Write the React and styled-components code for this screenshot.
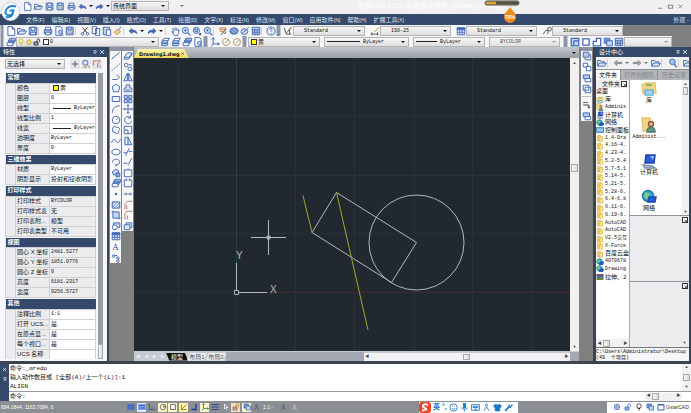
import React from "react";
import styled, { createGlobalStyle } from "styled-components";

const NAVY = "#34496b";
const CANVAS = "#212830";
const GRAY = "#808080";
const BLUE = "#3f68b4";
const SANS = `"Liberation Sans", "Noto Sans CJK SC", sans-serif`;
const MONO = `"Liberation Mono", "Noto Sans CJK SC", monospace`;

const GlobalStyle = createGlobalStyle`
  * { box-sizing: border-box; }
  body { margin: 0; font-family: ${SANS}; font-size: 6px; line-height: 8px; color: #111; }
  button, select, input { font: inherit; color: inherit; margin: 0; padding: 0; border: 0; background: none; }
  a { color: inherit; text-decoration: none; }
  ul { list-style: none; margin: 0; padding: 0; }
`;

/* ---------- icons, all drawn on a 16 unit grid ---------- */

const ICONS = {
  new: <path fill="#fff" d="M3 1h7l4 4v10H3zM10 1v4h4" />,
  open: (
    <g>
      <path d="M1 13V4h5l1 2h5v2" />
      <path fill="#dce6f5" d="M1 13l3-5h11l-3 5z" />
    </g>
  ),
  save: (
    <g>
      <path fill="#a9c0e6" d="M2 2h12v12H2z" />
      <path fill="#fff" d="M5 2h6v5H5zM4 10h8v4H4z" />
    </g>
  ),
  saveAs: (
    <g>
      <path fill="#a9c0e6" d="M2 2h11v12H2z" />
      <path fill="#fff" d="M5 2h5v4H5z" />
      <path stroke="#d08a2a" d="M14 7l-6 7" />
    </g>
  ),
  print: (
    <g>
      <path fill="#a9b9d6" d="M2 6h12v6H2z" />
      <path fill="#fff" d="M4 2h8v4H4zM4 10h8v4H4z" />
    </g>
  ),
  preview: (
    <g>
      <path fill="#fff" d="M3 1h8l2 3v11H3z" />
      <circle cx="10" cy="10" r="3" fill="#c5d6f2" />
      <path d="M12 12l3 3" />
    </g>
  ),
  undo: <path fill="currentColor" d="M2 8l4-4v3c5-1 8 1 8 5-2-2-4-3-8-2v2z" />,
  redo: <path fill="currentColor" d="M14 8l-4-4v3c-5-1-8 1-8 5 2-2 4-3 8-2v2z" />,
  cut: (
    <g>
      <path stroke="#333" d="M4 2l7 9M12 2L5 11" />
      <circle cx="4" cy="12.500" r="2" />
      <circle cx="12" cy="12.500" r="2" />
    </g>
  ),
  copy: <path fill="#fff" d="M2 1h7v11H2zM7 4h7v11H7z" />,
  paste: (
    <g>
      <path fill="#c9d6ea" d="M2 2h10v12H2z" />
      <path fill="#fff" d="M7 6h7v9H7z" />
    </g>
  ),
  brush: (
    <g stroke="#c98a34">
      <path fill="#f3d392" d="M2 10l5-5 5 4-5 5z" />
      <path d="M9 6l4-5" stroke="#3f68b4" />
    </g>
  ),
  pan: <path fill="#fff" d="M3 8l2 4 2 3h5l2-5V6M5 12V3M8 8V2M11 8V3M14 8V5" />,
  zoomIn: (
    <g>
      <circle cx="7" cy="7" r="5" fill="#d5e3fa" />
      <path strokeWidth="2" d="M11 11l4 4" />
      <path d="M5 7h4M7 5v4" />
    </g>
  ),
  zoomWin: (
    <g>
      <circle cx="7" cy="7" r="5" fill="#d5e3fa" />
      <path strokeWidth="3" stroke="#222a55" d="M12 12l2 2" />
      <path d="M5 5h4v4H5z" />
    </g>
  ),
  search: (
    <g>
      <circle cx="7" cy="6" r="4.500" fill="#9fc6ee" />
      <path strokeWidth="2" d="M10 10l4 5" />
    </g>
  ),
  props: (
    <g>
      <path stroke="#c07a3a" d="M3 3h9v3H3zM3 9h6" />
      <path stroke="#444" d="M5 14l8-9M10 13l3-4" />
    </g>
  ),
  globe: (
    <g>
      <ellipse cx="8" cy="8" rx="6.500" ry="5" fill="#5f86c8" />
      <path stroke="#c5d6f2" d="M3 6l6 6M6 4l7 6" />
    </g>
  ),
  tools: (
    <g>
      <ellipse cx="7" cy="9" rx="5.500" ry="4.500" fill="#d5e3fa" />
      <path d="M4 11l5-4M7 9l7-7" />
    </g>
  ),
  calc: (
    <g>
      <path fill="#c5d6f2" d="M2 2h12v12H2z" />
      <path d="M2 6h12M6 6v8M10 6v8M2 10h12" />
    </g>
  ),
  help: (
    <g>
      <circle cx="8" cy="8" r="6.500" fill="#eef3fc" />
      <path d="M6 6c0-3 5-2 4 0-1 1-2 1-2 3M8 11v1.500" />
    </g>
  ),
  textStyle: (
    <g stroke="#555">
      <path d="M2 3l3 10h8M13 2L6 11M10 5l1 8" />
      <path stroke="#c98a34" d="M14 2l-4 5" />
    </g>
  ),
  dimStyle: (
    <g stroke="#555">
      <path d="M1 13h13M3 10v5M12 10v5" />
      <path stroke="#c98a34" d="M14 2L7 10" />
    </g>
  ),
  leader: (
    <g stroke="#555">
      <path d="M2 13l4-6h4" />
      <circle cx="12" cy="5" r="3" />
      <path d="M10 8l-1 5" />
    </g>
  ),
  layers: (
    <g>
      <path fill="#fff" d="M6 2h9l-3 5H3z" />
      <path fill="#c5d6f2" d="M4 6h9l-2 4H2zM4 10h9l-2 4H2z" />
    </g>
  ),
  layersBox: (
    <g>
      <path fill="#c5d6f2" d="M6 2h9v5H6zM4 5h9v5H4z" />
      <path fill="#fff" d="M2 9h9v5H2z" />
    </g>
  ),
  bulb: (
    <g stroke="#c9b23a">
      <circle cx="8" cy="6" r="4.500" fill="#fff6a0" />
      <path d="M6 11h4M6 13h4" />
    </g>
  ),
  sun: (
    <g stroke="#b39427">
      <circle cx="8" cy="8" r="4" fill="#ffe96a" />
      <path d="M8 1v2M8 13v2M1 8h2M13 8h2M3 3l1 1M13 3l-1 1M3 13l1-1M13 13l-1-1" />
    </g>
  ),
  lock: (
    <g>
      <path fill="#8fa9dc" d="M2 8h8v6H2z" />
      <path d="M8 8V4c0-3 5-3 5 0v4" />
    </g>
  ),
  ucs: <path d="M5 1v10h10M3 4l2-3 2 3M12 9l3 2-3 2M5 11l-3 4" />,
  ucsWorld: (
    <g stroke="#b0895a">
      <circle cx="8" cy="8" r="5.500" fill="#fff" />
      <path d="M6 10l5-5" />
    </g>
  ),
  line: <path d="M1 13L14 2" />,
  xline: <path strokeDasharray="3 2" d="M1 14L15 2" />,
  pline: <path d="M2 12h7c5 0 5-7 0-7" />,
  polygon: <path fill="#eef4ff" d="M8 2l6 4-2 8H4L2 6z" />,
  rect: <path fill="#eef4ff" d="M2 4h12v8H2z" />,
  arc: <path d="M2 14C2 7 7 3 14 3" />,
  circle: (
    <g>
      <circle cx="8" cy="8" r="6" fill="#fff" />
      <path d="M8 8l3-3" />
    </g>
  ),
  cloud: <path d="M3 8c-2-5 4-7 6-4 5-1 6 4 3 6 1 5-5 5-6 1-3 1-5-1-3-3z" />,
  spline: <path d="M1 11c3-8 5-6 7-3s4 5 7-3" />,
  ellipse: <ellipse cx="8" cy="8" rx="6.500" ry="4.500" fill="#fff" />,
  ellipseArc: <path d="M2 9c0-7 12-7 12-1 0 4-5 5-7 5M9 11l-2 2 2 2" />,
  block: (
    <g>
      <path fill="#c5d6f2" d="M2 6l5-4 5 2v7H4z" />
      <path fill="#8fa9dc" d="M8 8h6v6H8z" />
    </g>
  ),
  point: <rect x="7" y="7" width="2" height="2" />,
  hatch: (
    <g>
      <path fill="#9fb8e8" d="M2 3h12v10H2z" />
      <path stroke="#fff" d="M4 12l8-8M3 8l4-4M9 12l4-4" />
    </g>
  ),
  gradient: (
    <g>
      <path fill="#c5d6f2" d="M3 3h10v10H3z" />
      <path d="M1 3h2M13 13h2M3 1v2M13 13v2" />
    </g>
  ),
  region: (
    <g>
      <path fill="#c5d6f2" d="M4 3h10v7H4z" />
      <circle cx="6" cy="10" r="4" fill="#fff" />
    </g>
  ),
  table: (
    <g>
      <path fill="#fff" d="M2 3h12v11H2z" />
      <path fill="currentColor" d="M2 3h12v3H2z" />
      <path d="M6 6v8M10 6v8M2 10h12" />
    </g>
  ),
  points: (
    <g>
      <circle cx="4" cy="5" r="2" />
      <circle cx="11" cy="8" r="2" />
      <circle cx="11" cy="13" r="2" />
      <path d="M6 4h4" />
    </g>
  ),
  erase: <path fill="#dfe8f8" d="M2 10l5-7h7l-4 7zM2 10v3h7l5-7V3" />,
  copyObj: (
    <g>
      <circle cx="5" cy="5" r="3" />
      <circle cx="11" cy="11" r="3" />
      <path d="M9 4h4v3" />
    </g>
  ),
  mirror: <path fill="#dfe8f8" d="M7 2v12H1zM9 2v12h6z" />,
  offset: <path fill="#dfe8f8" d="M2 14V8h3V3h6v5h3v6zM5 11h6" />,
  array: <path fill="#c5d6f2" d="M2 2h5v5H2zM9 2h5v5H9zM2 9h5v5H2zM9 9h5v5H9z" />,
  move: <path d="M8 1v14M1 8h14M6 3l2-2 2 2M6 13l2 2 2-2M3 6L1 8l2 2M13 6l2 2-2 2" />,
  rotate: <path d="M12 4c-5-4-11 1-9 6s9 5 11 0M12 1v4H8" />,
  scale: <path d="M2 2h12v12H2zM2 8h6v6" />,
  stretch: <path fill="#dfe8f8" d="M3 2h5l6 12H3zM8 2v12" />,
  trim: <path d="M1 9h5M9 7h6M4 14L10 2" />,
  extend: <path d="M1 10h6M8 13l6-11" />,
  breakAt: <path d="M2 3h12v11H2zM7 2h3" />,
  breakObj: <path d="M6 3H2v11h12V3h-4M6 1v4M10 1v4" />,
  join: <path d="M1 8h5M10 8h5M5 6l2 2-2 2M11 6L9 8l2 2" />,
  chamfer: <path stroke="#b77a66" d="M3 15V6l4-4h8M6 15V8" />,
  fillet: <path stroke="#b77a66" d="M3 15V8c0-4 2-6 6-6h6M7 15V9" />,
  explode: <path fill="#dfe8f8" d="M2 6h9v8H2zM5 3h9v8h-3M5 3v3" />,
  front: (
    <g>
      <path fill="#fff" d="M5 6h9v8H5z" />
      <path fill="#b9c9f2" d="M2 2h9v8H2z" />
    </g>
  ),
  back: <path fill="#fff" d="M2 2h7v6H2zM7 7h7v7H7z" />,
  above: (
    <g>
      <path fill="#b9c9f2" d="M2 3h10v6H2z" />
      <path fill="#fff" d="M5 9h9v5H5z" />
    </g>
  ),
  under: <path fill="#fff" d="M2 2h9v8H2zM5 5h9v9H5z" />,
  textFront: <path stroke="#333" d="M2 4h3M6 4h3M2 8h9v5M9 11l2 2 2-2" />,
  pick: <path stroke="#555" d="M8 3v10M3 8h10" />,
  quick: (
    <g>
      <circle cx="7" cy="6" r="4" />
      <path stroke="#c07a3a" d="M9 8l5 6M4 13h5" />
    </g>
  ),
  filter: <path stroke="#b77a66" d="M2 3h11l-4 5v6M2 3v8M12 10l2 4" />,
  left: <path stroke="#888" fill="#aaa" d="M2 8l4-4v3h8v2H6v3z" />,
  right: <path stroke="#888" fill="#aaa" d="M14 8l-4-4v3H2v2h8v3z" />,
  first: <path fill="currentColor" d="M12 3L5 8l7 5zM3 3v10" />,
  prev: <path fill="currentColor" d="M11 3L4 8l7 5z" />,
  next: <path fill="currentColor" d="M5 3l7 5-7 5z" />,
  last: <path fill="currentColor" d="M4 3l7 5-7 5zM13 3v10" />,
  vp1: <path fill="#c5d6f2" strokeWidth="2" d="M2 2h12v12H2zM6 6h8M6 6v8" />,
  vp2: <path fill="#fff" strokeWidth="2" d="M3 3h10v10H3z" />,
  vp3: <path fill="#fff" strokeWidth="2" d="M2 14V7h5V2h7v12z" />,
  ortho: <path strokeWidth="3" d="M12 2v11H3" />,
  grid: <path strokeWidth="2" d="M2 2v12M6 2v12M10 2v12M14 2v12M2 5h12M2 10h12" />,
  snap: <path d="M3 2v11h11M6 10h1M9 10h1" />,
  polar: (
    <g stroke="#555">
      <circle cx="8" cy="8" r="5.500" />
      <path d="M8 8h7M8 8l4-5" />
    </g>
  ),
  track: <path stroke="#8a6a20" d="M3 13L13 3M3 3v10h10" />,
  lwt: <path strokeWidth="2" d="M1 3h14M1 8h14M1 13h14" />,
  cursor: <path stroke="#fff" d="M5 2v10l3-3h4zM8 10l2 4" />,
  person: (
    <g>
      <circle cx="8" cy="4" r="2" />
      <path d="M3 14l5-7 5 7" />
    </g>
  ),
  smile: (
    <g>
      <circle cx="8" cy="8" r="6.500" />
      <path d="M5 9c1 3 5 3 6 0M6 5v1M10 5v1" />
    </g>
  ),
  mic: (
    <g>
      <rect x="6" y="1" width="4" height="8" fill="currentColor" />
      <path d="M3 8c0 5 10 5 10 0M8 12v3" />
    </g>
  ),
  keyboard: (
    <g>
      <path d="M1 3h14v10H1z" />
      <path d="M3 6h10M3 8h10M5 11h6" />
    </g>
  ),
  shirt: <path fill="currentColor" d="M5 2l3 2 3-2 4 3-2 3-1-1v7H4V7L3 8 1 5z" />,
  wrench: <path strokeWidth="3" d="M2 14l7-7M9 3v4h4M13 3l2 2" />,
  gear: (
    <g>
      <circle cx="8" cy="8" r="5.500" fill="#dbe6f6" />
      <circle cx="8" cy="8" r="2.500" />
    </g>
  ),
  windows: (
    <g>
      <path fill="#7793d6" d="M2 2h9v8H2z" />
      <path fill="#c5d6f2" d="M6 6h9v8H6z" />
    </g>
  ),
  bulbLine: (
    <g stroke="#222">
      <circle cx="8" cy="6" r="4.500" fill="#fff" />
      <path strokeWidth="2" d="M6 11h4M7 14h2" />
    </g>
  ),
  square: <path strokeWidth="2" d="M2 3h12v11H2zM2 4h12" />,
  close: <path d="M4 4l8 8M12 4l-8 8" />,
  min: <path d="M3 12h9" />,
  max: <path d="M3 5h10v7H3z" />,
  pin: <path d="M5 4h6v6H5zM8 10v4" />,
  folder: (
    <g stroke="#e0b654">
      <path fill="#f2cc62" d="M3 3h6l1 11H3z" />
      <path fill="#fbe59b" d="M9 5h4v9H6z" />
    </g>
  ),
  pc: (
    <g stroke="#1d46a8">
      <path fill="#2c5bd8" d="M5 2h9l-1 8H4z" />
      <path fill="#b8c4d8" stroke="#8390a8" d="M2 12l9 1 3 2H4z" />
      <path fill="#9fc3ff" stroke="none" d="M9 3h4l-1 4z" />
    </g>
  ),
  net: (
    <g>
      <circle cx="7" cy="7" r="5.500" fill="#3aa7cf" stroke="#1e7da6" />
      <path stroke="none" fill="#7fd07c" d="M4 3l5 2-3 5-3-2z" />
      <path stroke="#1d46a8" fill="#2c5bd8" d="M8 8h7l-1 5H7z" />
    </g>
  ),
  lib: (
    <g>
      <path fill="#f2d57c" stroke="#e3c878" d="M1 4l4-2h9l1 10H2z" />
      <path fill="#a8d6f0" stroke="#6fb0d8" d="M4 9h8v5H4z" />
      <path stroke="#5fae5c" d="M5 4h6" />
    </g>
  ),
  user: (
    <g>
      <path fill="#f2d57c" stroke="#e3c878" d="M1 1h8l1 13H2z" />
      <circle cx="10" cy="7" r="2.500" fill="#e6bd94" stroke="#8a5a3a" />
      <path fill="#5f9f8a" stroke="#4a7a6a" d="M6 15c0-6 8-6 8 0z" />
    </g>
  ),
  control: (
    <g>
      <path fill="#6fb3e8" stroke="#3a7fc0" d="M1 3h14v10H1z" />
      <path stroke="#fff" d="M4 10V6M8 10V5M12 10V7" />
    </g>
  ),
  rar: (
    <g stroke="none">
      <path fill="#8a4a6a" d="M1 2h14v4H1z" />
      <path fill="#3f7a9a" d="M1 6h14v4H1z" />
      <path fill="#6a8a3a" d="M1 10h14v4H1z" />
    </g>
  ),
};

const Svg = styled.svg`
  display: block;
  flex: none;
  fill: none;
  stroke: currentColor;
`;

const Icon = ({ name, size = 10 }) => (
  <Svg width={size} height={size} viewBox="0 0 16 16" strokeWidth="1.500" aria-hidden="true">
    {ICONS[name]}
  </Svg>
);

/* ---------- shared parts ---------- */

const IconButton = styled.button`
  display: grid;
  place-items: center;
  flex: none;
  width: ${(p) => p.$w || 11}px;
  height: 10px;
  color: ${(p) => p.$color || BLUE};
  background: ${(p) => p.$bg || "none"};
`;

const Caret = styled.span`
  flex: none;
  width: 0;
  height: 0;
  margin: 0 ${(p) => p.$gap || 3}px;
  border: 2px solid transparent;
  border-top-color: ${(p) => p.$color || "#111"};
  border-bottom: 0;
`;

const Separator = styled.span`
  flex: none;
  width: 4px;
  height: 8px;
  border-left: 1px solid #d0d2d8;
  margin-right: ${(p) => p.$after || 0}px;
`;

const Grip = styled.span`
  flex: none;
  align-self: stretch;
  width: ${(p) => p.$w || 5}px;
  background: #8b95a6;
  border: solid #c2c6ce;
  border-width: 0 1px;
  margin-right: 1px;
`;

const Toolbar = styled.div`
  display: flex;
  align-items: center;
  height: 11px;
  background: #f6f6f9;
`;

const ToolbarRest = styled.div`
  flex: 1;
  align-self: stretch;
  background: ${GRAY};
`;

const ComboBox = styled.span`
  display: flex;
  align-items: center;
  flex: none;
  width: ${(p) => p.$w}px;
  height: 10px;
  margin-right: ${(p) => p.$after || 0}px;
  border: 1px solid #b4b4b8;
  background: linear-gradient(#f7f7f7, #dedede);
`;

const ComboSelect = styled.select`
  appearance: none;
  flex: 1;
  min-width: 0;
  height: 8px;
  line-height: 8px;
  padding-left: ${(p) => p.$indent || 1}px;
  font-family: ${(p) => (p.$cjk ? SANS : MONO)};
  font-size: ${(p) => (p.$cjk ? 6 : 5)}px;
  color: ${(p) => (p.$dim ? "#555" : "#111")};
`;

const Swatch = styled.span`
  flex: none;
  width: 6px;
  height: 6px;
  margin-left: 2px;
  border: 1px solid #333;
  background: ${(p) => p.$color};
`;

const Rule = styled.span`
  flex: none;
  width: ${(p) => p.$w}px;
  height: 1px;
  margin: 0 2px;
  background: #222;
`;

const Combo = ({ label, value, w, after, indent, cjk, dim, children }) => (
  <ComboBox $w={w} $after={after}>
    {children}
    <ComboSelect aria-label={label} $indent={indent} $cjk={cjk} $dim={dim} defaultValue={value}>
      <option>{value}</option>
    </ComboSelect>
    <Caret $color={dim && "#999"} />
  </ComboBox>
);

const Tools = ({ names, w, color, size, bg }) =>
  names.map((n, i) => (
    <IconButton key={n + i} $w={w} $color={color} $bg={bg} aria-label={n}>
      <Icon name={n} size={size} />
    </IconButton>
  ));

const Track = styled.div`
  display: flex;
  flex: none;
  flex-direction: ${(p) => (p.$row ? "row" : "column")};
  align-items: center;
  ${(p) => (p.$row ? "height" : "width")}: ${(p) => p.$size || 9}px;
  background: ${(p) => p.$bg || "#f1f1f3"};
`;

const Room = styled.span`
  flex: ${(p) => p.$share || 1};
`;

const Thumb = styled.span`
  flex: none;
  width: ${(p) => p.$w || 7}px;
  height: ${(p) => p.$h || 7}px;
  border: 1px solid #a9a9ad;
  background: linear-gradient(90deg, #fafafa, #d8d8da);
`;

const Arrow = styled.button`
  flex: none;
  width: 7px;
  height: 7px;
  font-size: 4px;
  line-height: 7px;
  text-align: center;
  color: #444;
`;

/* ---------- frame ---------- */

const Shell = styled.div`
  display: flex;
  flex-direction: column;
  height: 100vh;
  overflow: hidden;
  background: ${GRAY};
`;

const TitleBar = styled.header`
  position: relative;
  display: flex;
  align-items: center;
  height: 14px;
  padding: 0 6px 2px 22px;
  background: #f0eff1;
`;

const Logo = styled.svg`
  position: absolute;
  left: 1px;
  top: 2px;
  z-index: 2;
`;

const DocTitle = styled.span`
  flex: 1;
  padding-left: 170px;
  color: #fff;
  font-size: 7px;
`;

const Gauge = styled.svg`
  position: absolute;
  left: 484px;
  top: 0;
  z-index: 2;
`;

const MenuBar = styled.nav`
  display: flex;
  align-items: center;
  gap: 7px;
  height: 11px;
  padding: 0 2px 0 26px;
  background: ${NAVY};
  color: #dfe4ee;
  white-space: nowrap;
`;

const MenuItem = styled.a`
  font-size: 6px;
  line-height: 10px;

  &:last-child {
    margin-left: auto;
  }
`;

const Key = styled.span`
  font-size: 5px;
`;

const Main = styled.main`
  display: flex;
  flex: 1;
  min-height: 0;
`;

const PanelTitle = styled.div`
  display: flex;
  align-items: center;
  flex: none;
  height: 10px;
  padding: 0 1px 0 3px;
  background: ${NAVY};
  color: #fff;

  h2 {
    flex: 1;
    margin: 0;
    font-size: 6px;
    font-weight: 400;
  }
`;

/* ---------- properties ---------- */

const PropsPanel = styled.section`
  display: flex;
  flex-direction: column;
  flex: none;
  width: 109px;
  background: #f6f7fa;
  border-right: 2px solid #3b4353;
`;

const SelectionRow = styled.div`
  display: flex;
  align-items: center;
  gap: 1px;
  padding: 2px 4px 4px 5px;
`;

const PropsScroll = styled.div`
  display: flex;
  flex: 1;
  min-height: 0;
  gap: 2px;
  margin: 0 4px 2px 5px;
`;

const Groups = styled.div`
  flex: 1;
  display: flex;
  flex-direction: column;
  gap: 1px;
  overflow: hidden;
`;

const GroupTable = styled.table`
  flex: none;
  width: 100%;
  table-layout: fixed;
  border-collapse: collapse;
  background: #e4e4e6;

  tr {
    height: 10px;
  }
  thead th {
    padding: 0 2px;
    text-align: left;
    font-weight: 700;
    color: #fff;
    background: ${NAVY};
    line-height: 9px;
  }
  td,
  tbody th {
    padding: 0 0 0 1px;
    overflow: hidden;
    white-space: nowrap;
    text-align: left;
    font-weight: 400;
    line-height: 9px;
    border: 1px solid #d0d0d2;
    background: ${(p) => (p.$readonly ? "#ececee" : "#fff")};
  }
  tbody th {
    background: #ececee;
  }
`;

const Indent = styled.col`
  width: 10px;
`;

const LabelCol = styled.col`
  width: 34px;
`;

const Value = styled.span`
  display: flex;
  align-items: center;
  gap: 1px;
  font-family: ${MONO};
  font-size: ${(p) => (p.$latin ? 5 : 6)}px;
  height: 9px;
`;

const GROUPS = [
  {
    title: "常规",
    rows: [
      ["颜色", "黄", "swatch"],
      ["图层", "0"],
      ["线型", "ByLayer", "line"],
      ["线型比例", "1"],
      ["线宽", "ByLayer", "line"],
      ["透明度", "ByLayer"],
      ["厚度", "0"],
    ],
  },
  { title: "三维效果", rows: [["材质", "ByLayer"], ["阴影显示", "投射和接收阴影"]] },
  {
    title: "打印样式",
    readonly: true,
    rows: [
      ["打印样式", "BYCOLOR"],
      ["打印样式表", "无"],
      ["打印表附...", "模型"],
      ["打印表类型", "不可用"],
    ],
  },
  {
    title: "视图",
    readonly: true,
    rows: [
      ["圆心 X 坐标", "2481.5277"],
      ["圆心 Y 坐标", "1851.0776"],
      ["圆心 Z 坐标", "0"],
      ["高度", "6181.2317"],
      ["宽度", "9256.5727"],
    ],
  },
  {
    title: "其他",
    rows: [
      ["注释比例", "1:1"],
      ["打开 UCS...", "是"],
      ["在原点显...", "是"],
      ["每个视口...", "是"],
      ["UCS 名称", ""],
    ],
  },
];

const PropertyGroup = ({ title, rows, readonly }) => (
  <GroupTable $readonly={readonly}>
    <colgroup>
      <Indent />
      <LabelCol />
      <col />
    </colgroup>
    <thead>
      <tr>
        <th colSpan={3}>{title}</th>
      </tr>
    </thead>
    <tbody>
      {rows.map(([label, value, kind]) => (
        <tr key={label}>
          {label === rows[0][0] && <th rowSpan={rows.length} aria-hidden="true" />}
          <th scope="row">{label}</th>
          <td>
            <Value $latin={/^[\w.:]*$/.test(value)}>
              {kind === "swatch" && <Swatch $color="#ffff00" />}
              {kind === "line" && <Rule $w={18} />}
              {value}
            </Value>
          </td>
        </tr>
      ))}
    </tbody>
  </GroupTable>
);

const Properties = () => (
  <PropsPanel>
    <PanelTitle>
      <h2>特性</h2>
      <IconButton $w={7} $color="#fff" aria-label="固定">
        <Icon name="pin" size={6} />
      </IconButton>
      <IconButton $w={8} $color="#fff" aria-label="关闭">
        <Icon name="close" size={8} />
      </IconButton>
    </PanelTitle>
    <SelectionRow>
      <Combo label="选择" value="无选择" w={60} after={4} cjk />
      <Tools names={["pick", "quick", "filter"]} w={10} bg="#e2e5ee" />
    </SelectionRow>
    <PropsScroll>
      <Groups>
        {GROUPS.map((g) => (
          <PropertyGroup key={g.title} {...g} />
        ))}
      </Groups>
      <Track $size={5} $bg="#9b9ba1">
        <Room />
        <Thumb $w={5} $h={15} />
      </Track>
    </PropsScroll>
  </PropsPanel>
);

/* ---------- tool columns ---------- */

const ToolColumn = styled.div`
  display: flex;
  flex-direction: column;
  flex: none;
  align-self: flex-start;
  width: 11px;
  height: ${(p) => p.$h}px;
  border-top: 4px solid #8b95a6;
  background: #f8f8fb;

  ${IconButton} {
    flex: 1;
    height: auto;
  }
`;

const ToolArea = styled.div`
  display: flex;
  flex: none;
  gap: 1px;
  padding: ${(p) => p.$pad || "0 1px"};
`;

const TextTool = styled.button`
  flex: 1;
  font: 9px/10px "Liberation Serif", serif;
  color: #2b4a86;
`;

const ColumnRule = styled.hr`
  width: 9px;
  margin: 2px 1px;
  border: 0;
  border-top: 1px solid #b9bcc4;
`;

const DRAW = [
  "line", "xline", "pline", "polygon", "rect", "arc", "circle", "cloud", "spline", "ellipse",
  "ellipseArc", "block", "layersBox", "point", "hatch", "gradient", "region", "table",
];
const MODIFY = [
  "erase", "copyObj", "mirror", "offset", "array", "move", "rotate", "scale", "stretch",
  "trim", "extend", "breakAt", "breakObj", "join", "chamfer", "fillet", "explode",
];

/* ---------- drawing window ---------- */

const DrawingWindow = styled.section`
  display: flex;
  flex-direction: column;
  flex: 1;
  min-width: 0;
`;

const DocTabs = styled.div`
  display: flex;
  align-items: flex-end;
  justify-content: space-between;
  height: 11px;
  padding-right: 2px;
  background: linear-gradient(#c3c6cd, #9a9ea8);
`;

const DocTab = styled.button`
  display: flex;
  align-items: center;
  justify-content: space-between;
  width: 55px;
  height: 9px;
  padding: 0 4px 0 5px;
  font-size: 5px;
  font-family: "DejaVu Sans", sans-serif;
  font-weight: 700;
  white-space: nowrap;
  background: linear-gradient(#fff6b0, #f3dc5a);
  clip-path: polygon(4px 0, 50px 0, 100% 100%, 0 100%);
`;

const CanvasRow = styled.div`
  display: flex;
  flex: 1;
  min-height: 0;
  background: ${CANVAS};

  ${Track} {
    padding: 1px 0;
  }
`;

const Drawing = styled.svg`
  flex: 1;
  min-width: 0;
  height: 100%;
  fill: none;
  stroke: #b3b8be;
  stroke-width: 1;

  text {
    fill: #b3b8be;
    stroke: none;
    font-size: 10px;
  }
`;

const LayoutBar = styled.div`
  display: flex;
  align-items: center;
  height: 10px;
  padding-top: 1px;
  background: #c6cad3;
`;

const LayoutTab = styled.button`
  width: ${(p) => (p.$active ? 22 : 20)}px;
  height: 8px;
  margin-right: -1px;
  font-size: 6px;
  line-height: 8px;
  color: ${(p) => (p.$active ? "#fff" : "#555")};
  background: ${(p) => (p.$active ? "#0c0d10" : "#e9ebef")};
  clip-path: polygon(${(p) => (p.$active ? "0 0, 85% 0, 100% 100%, 15% 100%" : "15% 0, 100% 0, 85% 100%, 0 100%")});
`;

const Splitter = styled.span`
  flex: 2;
  align-self: stretch;
  margin-left: 1px;
  background: #a3a8b3;
`;

const HTrack = styled(Track)`
  flex: 3;
`;

const Corner = styled.span`
  width: 9px;
  align-self: stretch;
  background: #a3a8b3;
`;

const GRID_X = [44, 161, 220, 280, 338, 397];
const GRID_Y = [58, 117, 175];

const Canvas = () => (
  <Drawing role="img" aria-label="Drawing1.dwg">
    <g stroke="#28313a">
      {GRID_X.map((x) => (
        <line key={x} x1={x + 0.5} x2={x + 0.5} y1="0" y2="100%" />
      ))}
      {GRID_Y.map((y) => (
        <line key={y} x1="0" x2="100%" y1={y + 0.5} y2={y + 0.5} />
      ))}
      <line x1="102.500" x2="102.500" y1="237" y2="100%" />
      <line x1="0" x2="100" y1="234.500" y2="234.500" />
    </g>
    <line x1="102.500" x2="102.500" y1="0" y2="205" stroke="#26472f" />
    <line x1="133" x2="100%" y1="234.500" y2="234.500" stroke="#45282f" />
    <circle cx="282.500" cy="184.500" r="47.500" />
    <path d="M202.500 134.500L282.500 184.500L257.500 224.500L178 174.500Z" />
    <path stroke="#a3a82f" d="M169 137.500L178 174.500M202.500 134.500L234 272" />
    <path d="M117 179.500h35M134.500 162v35M133 178h3v3h-3zM102.500 205v27M105 234.500h28M100.500 232.500h4v4h-4z" />
    <text x="102" y="201">
      Y
    </text>
    <text x="136" y="235">
      X
    </text>
  </Drawing>
);

/* ---------- design center ---------- */

const DesignPanel = styled.section`
  display: flex;
  flex-direction: column;
  flex: none;
  width: 98px;
  border: solid #3b4353;
  border-width: 0 2px 0 3px;
  background: #f1f1f3;
`;

const DesignTools = styled.div`
  display: flex;
  align-items: center;
  height: 12px;
  overflow: hidden;
`;

const DesignTabs = styled.div`
  display: flex;
  align-items: flex-end;
  gap: 1px;
  height: 11px;
  background: #8d8f94;
  overflow: hidden;
`;

const DesignTab = styled.button`
  flex: none;
  width: ${(p) => p.$w}px;
  height: 10px;
  white-space: nowrap;
  color: ${(p) => (p.$active ? "#000" : "#84868c")};
  background: ${(p) => (p.$active ? "#fff" : "#b2b4b9")};
`;

const DesignBody = styled.div`
  display: flex;
  flex: 1;
  min-height: 0;
`;

const TreePane = styled.div`
  display: flex;
  flex-direction: column;
  flex: none;
  width: 34px;
  background: #fff;
  border-right: 1px solid #a9a9ad;
`;

const TreeHead = styled.div`
  display: flex;
  align-items: center;
  justify-content: flex-end;
  gap: 1px;
  height: 8px;
  padding-right: 2px;
  background: #eeeef0;
  white-space: nowrap;
`;

const CloseBox = styled.button`
  display: grid;
  place-items: center;
  flex: none;
  width: 6px;
  height: 6px;
  border: 1px solid #333;
  background: #fff;
`;

const Tree = styled.ul`
  display: grid;
  grid-auto-rows: 1fr;
  height: 193px;
  margin-bottom: auto;
`;

const TreeItem = styled.li`
  display: flex;
  align-items: center;
  gap: 1px;
  min-height: 0;
  white-space: nowrap;
  font-family: ${MONO};
  font-size: ${(p) => (p.$latin ? 5 : 6)}px;
  line-height: 7px;
`;

const ContentPane = styled.div`
  display: flex;
  flex-direction: column;
  flex: 1;
  min-width: 0;
`;

const FileList = styled.div`
  display: flex;
  flex: none;
  height: 135px;
  background: #fff;
`;

const Files = styled.ul`
  flex: 1;
  padding-top: 1px;
  overflow: hidden;
`;

const FileItem = styled.li`
  display: flex;
  flex-direction: column;
  align-items: center;
  width: 38px;
  height: 36px;
  font-family: ${MONO};
  font-size: ${(p) => (p.$latin ? 5 : 6)}px;
`;

const Preview = styled.div`
  display: flex;
  flex: 1;
  justify-content: flex-end;
  padding: 1px;
  border-top: 1px solid #909296;
  background: #ececee;
`;

const PreviewSide = styled.div`
  display: flex;
  flex-direction: column;
  align-items: center;
  justify-content: space-between;
`;

const PathInfo = styled.p`
  margin: 0;
  height: 14px;
  padding-top: 1px;
  border-top: 1px solid #777;
  background: #f6f6f8;
  font-family: ${MONO};
  font-size: 5px;
  line-height: 6px;
  white-space: pre;
`;

const TREE = [
  ["", "桌面"],
  ["lib", "库"],
  ["user", "Adminis"],
  ["pc", "计算机"],
  ["net", "网络"],
  ["control", "控制面板"],
  ["folder", "1.4-Dra"],
  ["folder", "4.16-4."],
  ["folder", "4.23-4."],
  ["folder", "5.2-5.4"],
  ["folder", "5.7-5.1"],
  ["folder", "5.14-5."],
  ["folder", "5.21-5."],
  ["folder", "5.28-6."],
  ["folder", "6.4-6.8"],
  ["folder", "6.11-6."],
  ["folder", "6.19-6."],
  ["folder", "AutoCAD"],
  ["folder", "AutoCAD"],
  ["folder", "V2.5交互"],
  ["folder", "X-Force"],
  ["folder", "百度云盘"],
  ["net", "4070678"],
  ["net", "Drawing"],
  ["rar", "拉伸、2"],
];

const FILES = [
  ["lib", "库"],
  ["user", "Administ..."],
  ["pc", "计算机"],
  ["net", "网络"],
];

const DesignCenter = () => (
  <DesignPanel>
    <PanelTitle>
      <h2>设计中心</h2>
      <IconButton $w={7} $color="#fff" aria-label="固定">
        <Icon name="pin" size={6} />
      </IconButton>
      <IconButton $w={7} $color="#fff" aria-label="关闭">
        <Icon name="close" size={8} />
      </IconButton>
    </PanelTitle>
    <DesignTools>
      <Tools names={["open"]} />
      <Separator $after={2} />
      <Tools names={["left"]} w={9} />
      <Caret $color="#777" />
      <Tools names={["right"]} w={9} />
      <Caret $color="#777" />
      <Tools names={["open"]} w={10} />
      <Separator $after={2} />
      <Tools names={["search"]} />
      <Separator $after={1} />
      <Tools names={["open"]} w={10} />
    </DesignTools>
    <DesignTabs>
      <DesignTab $w={24} $active>
        文件夹
      </DesignTab>
      <DesignTab $w={36}>打开的图形</DesignTab>
      <DesignTab $w={32}>历史记录</DesignTab>
    </DesignTabs>
    <DesignBody>
      <TreePane>
        <TreeHead>
          文件夹
          <CloseBox aria-label="关闭">
            <Icon name="close" size={6} />
          </CloseBox>
        </TreeHead>
        <Tree>
          {TREE.map(([icon, label], i) => (
            <TreeItem key={i} $latin={/[A-Za-z.-]/.test(label) || /^\d+$/.test(label)}>
              {icon && <Icon name={icon} size={8} />}
              {label}
            </TreeItem>
          ))}
        </Tree>
        <Track $row $size={8}>
          <Arrow>◀</Arrow>
          <Thumb />
          <Room />
          <Arrow>▶</Arrow>
        </Track>
      </TreePane>
      <ContentPane>
        <FileList>
          <Files>
            {FILES.map(([icon, label]) => (
              <FileItem key={label} $latin={/^[\x20-\x7e]+$/.test(label)}>
                <Icon name={icon} size={16} />
                {label}
              </FileItem>
            ))}
          </Files>
          <Track $size={7}>
            <Arrow>▲</Arrow>
            <Thumb $w={5} $h={8} />
            <Room />
            <Arrow>▼</Arrow>
          </Track>
        </FileList>
        <Preview>
          <CloseBox aria-label="关闭预览">
            <Icon name="close" size={6} />
          </CloseBox>
        </Preview>
        <Preview>
          <PreviewSide>
            <CloseBox aria-label="关闭说明">
              <Icon name="close" size={6} />
            </CloseBox>
            <Arrow>▼</Arrow>
          </PreviewSide>
        </Preview>
      </ContentPane>
    </DesignBody>
    <PathInfo>{"C:\\Users\\Administrator\\Desktop\n(49  个项目)"}</PathInfo>
  </DesignPanel>
);

/* ---------- command line and status ---------- */

const CommandPanel = styled.section`
  display: flex;
  flex: none;
  height: 40px;
  border-top: 3px solid #3b4353;
  background: #fff;
  font-family: ${MONO};
`;

const CommandSide = styled.div`
  display: flex;
  flex-direction: column;
  align-items: center;
  flex: none;
  width: 9px;
  background: ${NAVY};
`;

const CommandBody = styled.div`
  flex: 1;
  display: flex;
  flex-direction: column;
`;

const History = styled.div`
  display: flex;
  justify-content: space-between;
  height: 28px;
  border-bottom: 1px solid #999;
`;

const Log = styled.pre`
  margin: 0;
  padding-left: 1px;
  font: 6px/9px ${MONO};
`;

const Prompt = styled.label`
  display: flex;
  align-items: center;
  flex: 1;
  padding-left: 1px;
`;

const PromptInput = styled.input`
  flex: 1;
`;

const PromptTrack = styled(Track)`
  width: 37px;
  margin-right: 9px;
`;

const StatusBar = styled.footer`
  display: flex;
  align-items: center;
  flex: none;
  height: 12px;
  background: #8b8e93;
`;

const Coords = styled.span`
  width: 126px;
  padding-left: 1px;
  color: #fff;
  font-size: 5px;
`;

const Toggle = styled(IconButton)`
  width: 9px;
  height: 9px;
  margin-right: ${(p) => p.$after || 2}px;
`;

const ScaleText = styled.span`
  color: #fff;
  font-size: 5px;
  margin-right: 6px;
`;

const Ime = styled.div`
  display: flex;
  align-items: center;
  gap: 2px;
  width: 99px;
  height: 11px;
  margin-left: auto;
  margin-right: 89px;
  background: #fff;
  color: #1b78c8;
  font-size: 7px;
  font-weight: 700;
`;

const Tray = styled.div`
  display: flex;
  align-items: center;
  height: 11px;
  width: 84px;
  padding-left: 4px;
  background: #fdfdfe;
  font-size: 5px;
  color: #333;
`;

const TOGGLES = [
  ["grid", "none", "#2f62d8"],
  ["grid", "#dbe8ff", "#2f62d8"],
  ["snap", "none", "#2b4a86"],
  ["polar", "#fff6c8"],
  ["vp2", "#fff6c8", "#777"],
  ["track", "#fff3a8"],
  ["ortho", "none", "#1f3f9c"],
  ["ucs", "#fff6c8", "#3a7a4a"],
  ["lwt", "none", "#2b4a86"],
  ["cursor", "none"],
  ["lock", "#f3dcc0", "#b86a20"],
  ["windows", "#fff6c8"],
];

const MENUS = [
  ["文件", "F"],
  ["编辑", "E"],
  ["视图", "V"],
  ["插入", "I"],
  ["格式", "O"],
  ["工具", "T"],
  ["绘图", "D"],
  ["文字", "X"],
  ["标注", "N"],
  ["修改", "M"],
  ["窗口", "W"],
  ["应用软件", "N"],
  ["帮助", "H"],
  ["扩展工具", "X"],
];

const App = () => {
  return (
    <Shell>
      <GlobalStyle />
      <TitleBar>
        <Logo width="19" height="19" viewBox="0 0 19 19" aria-label="GstarCAD">
          <circle cx="9.500" cy="9.500" r="9" fill="#fff" stroke="#c8d2e2" />
          <path
            d="M15 4.500C9 3 5 6 4.500 9.500C4 13 8 14 11 12.500L12.500 8.500H8.500M12 11C11 14.500 8 15.500 5 15"
            fill="none"
            stroke="#1b87d0"
            strokeWidth="2"
          />
        </Logo>
        <Tools names={["new", "open", "save", "saveAs", "print", "undo"]} size={9} />
        <Caret $gap={1} />
        <Tools names={["redo"]} size={9} />
        <Caret $gap={1} />
        <Combo label="工作空间" value="传统界面" w={58} after={8} cjk />
        <Caret $color="#777" />
        <DocTitle>浩辰CAD 2012 标准版试用期 - [Drawing1.dwg]</DocTitle>
        <Gauge width="40" height="26" viewBox="0 0 40 26" aria-label="70%">
          <rect x="1" y="1" width="34" height="4" rx="2" fill="#d9a23a" stroke="#4a4a48" />
          <path d="M12 3h22" stroke="#4d554a" strokeWidth="3" />
          <path d="M26 7C24 11 20 12 20 17a6 6 0 0 0 12 0C32 12 28 11 26 7z" fill="#ef8a1d" />
          <text x="21" y="19" fontSize="5" fontWeight="700" fill="#fff">
            70%
          </text>
        </Gauge>
        <Tools names={["min", "max", "close"]} w={10} size={7} color="#555" />
      </TitleBar>
      <MenuBar>
        {MENUS.map(([text, key]) => (
          <MenuItem href="#" key={text}>
            {text}
            <Key>({key})</Key>
          </MenuItem>
        ))}
        <MenuItem href="#">外观 -</MenuItem>
      </MenuBar>

      <Toolbar>
        <Grip $w={4} />
        <Tools names={["new", "open", "save"]} />
        <Separator />
        <Tools names={["print", "preview", "saveAs"]} />
        <Separator />
        <Tools names={["cut", "copy", "paste", "brush"]} />
        <Separator />
        <Tools names={["undo"]} />
        <Caret $gap={2} />
        <Tools names={["redo"]} />
        <Caret $gap={2} />
        <Separator />
        <Tools names={["pan", "zoomIn", "zoomWin", "zoomIn"]} />
        <Separator />
        <Tools names={["props", "globe", "tools", "calc"]} />
        <Separator />
        <Tools names={["help"]} />
        <Grip />
        <Tools names={["textStyle"]} />
        <Combo label="文字样式" value="Standard" w={72} after={4} indent={10} />
        <Tools names={["dimStyle"]} />
        <Combo label="标注样式" value="ISO-25" w={71} after={4} indent={10} />
        <Tools names={["table"]} />
        <Combo label="表格样式" value="Standard" w={71} after={4} indent={10} />
        <Tools names={["leader"]} />
        <Combo label="引线样式" value="Standard" w={71} indent={10} />
        <ToolbarRest />
      </Toolbar>
      <Toolbar>
        <Grip $w={4} />
        <Tools names={["layersBox"]} />
        <ComboBox $w={143}>
          <Icon name="bulb" size={8} />
          <Icon name="sun" size={8} />
          <Icon name="lock" size={8} />
          <Swatch $color="#fff" />
          <ComboSelect aria-label="图层" defaultValue="0">
            <option>0</option>
          </ComboSelect>
          <Caret />
        </ComboBox>
        <Tools names={["layers", "layers", "layersBox", "preview"]} />
        <Grip />
        <Tools names={["ucs", "ucsWorld", "ucsWorld"]} />
        <Grip />
        <Combo label="颜色" value="黄" w={72} after={4} cjk>
          <Swatch $color="#ffff00" />
        </Combo>
        <Combo label="线型" value="ByLayer" w={85} after={4}>
          <Rule $w={33} />
        </Combo>
        <Combo label="线宽" value="ByLayer" w={72} after={4}>
          <Rule $w={21} />
        </Combo>
        <Combo label="打印样式" value="BYCOLOR" w={71} after={3} indent={10} dim />
        <Grip />
        <Tools names={["vp1", "vp2", "vp3", "windows", "calc"]} />
        <Combo label="视口比例" value="" w={48} dim />
        <ToolbarRest />
      </Toolbar>

      <Main>
        <Properties />
        <ToolArea>
          <ToolColumn $h={216}>
            <Tools names={DRAW} />
            <TextTool aria-label="多行文字">A</TextTool>
            <Tools names={["points"]} />
          </ToolColumn>
          <ToolColumn $h={184}>
            <Tools names={MODIFY} />
          </ToolColumn>
        </ToolArea>
        <DrawingWindow>
          <DocTabs>
            <DocTab>
              Drawing1.dwg <Icon name="close" size={5} />
            </DocTab>
            <IconButton $w={7} aria-label="文档列表">
              <Caret $gap={1} />
            </IconButton>
          </DocTabs>
          <CanvasRow>
            <Canvas />
            <Track>
              <Arrow>▲</Arrow>
              <Room $share={4} />
              <Thumb $h={8} />
              <Room $share={7} />
              <Arrow>▼</Arrow>
            </Track>
          </CanvasRow>
          <LayoutBar>
            <Tools names={["first", "prev", "next", "last"]} w={8} size={5} color="#f4f5f8" />
            <LayoutTab $active>模型</LayoutTab>
            <LayoutTab>布局1</LayoutTab>
            <LayoutTab>布局2</LayoutTab>
            <Splitter />
            <HTrack $row $size={8}>
              <Arrow>◀</Arrow>
              <Room />
              <Thumb $h={6} />
              <Room />
              <Arrow>▶</Arrow>
            </HTrack>
            <Corner />
          </LayoutBar>
        </DrawingWindow>
        <ToolArea $pad="0 1px 0 2px">
          <ToolColumn $h={74}>
            <Tools names={["front", "back", "above", "under"]} />
            <ColumnRule />
            <Tools names={["textFront", "above"]} />
          </ToolColumn>
        </ToolArea>
        <DesignCenter />
      </Main>

      <CommandPanel>
        <CommandSide>
          <IconButton $w={8} $color="#fff" aria-label="关闭">
            <Icon name="close" size={7} />
          </IconButton>
          <IconButton $w={8} $color="#fff" aria-label="固定">
            <Icon name="pin" size={6} />
          </IconButton>
        </CommandSide>
        <CommandBody>
          <History>
            <Log>{"命令:_mredo\n输入动作数目或 [全部(A)/上一个(L)]:1\nALIGN"}</Log>
            <Track>
              <Arrow>▲</Arrow>
              <Room />
              <Thumb />
              <Room />
              <Arrow>▼</Arrow>
            </Track>
          </History>
          <Prompt>
            命令:
            <PromptInput type="text" />
            <PromptTrack $row $size={8}>
              <Arrow>◀</Arrow>
              <Thumb />
              <Room />
              <Arrow>▶</Arrow>
            </PromptTrack>
          </Prompt>
        </CommandBody>
      </CommandPanel>

      <StatusBar>
        <Coords>684.1844, 1163.7084, 0</Coords>
        {TOGGLES.map(([name, bg, color], i) => (
          <Toggle key={i} $bg={bg} $color={color} $after={i % 2 ? 1 : 2} aria-label={name}>
            <Icon name={name} size={8} />
          </Toggle>
        ))}
        <Toggle $color="#2b4a86" aria-label="注释比例">
          <Icon name="person" size={7} />
        </Toggle>
        <ScaleText>1:1 -</ScaleText>
        <Toggle $color="#2b4a86" aria-label="注释可见性">
          <Icon name="person" size={7} />
        </Toggle>
        <Toggle $color="#ddd" aria-label="自动缩放">
          <Icon name="person" size={7} />
        </Toggle>
        <Ime>
          <svg width="12" height="11" viewBox="0 0 12 11" aria-label="输入法">
            <rect width="12" height="11" rx="3" fill="#ee4423" />
            <path d="M9 3C5 1 2 4 5 5.500S9 8 3 8.500" fill="none" stroke="#fff" strokeWidth="2" />
          </svg>
          英
          <span>°,</span>
          <Icon name="smile" size={9} />
          <Icon name="mic" size={9} />
          <Icon name="keyboard" size={9} />
          <Icon name="person" size={9} />
          <Icon name="shirt" size={9} />
          <Icon name="wrench" size={9} />
        </Ime>
        <Tray>
          <Tools names={["gear", "lock", "bulbLine", "windows", "square"]} w={11} size={8} />
          GstarCAD
        </Tray>
      </StatusBar>
    </Shell>
  );
};

export default App;
